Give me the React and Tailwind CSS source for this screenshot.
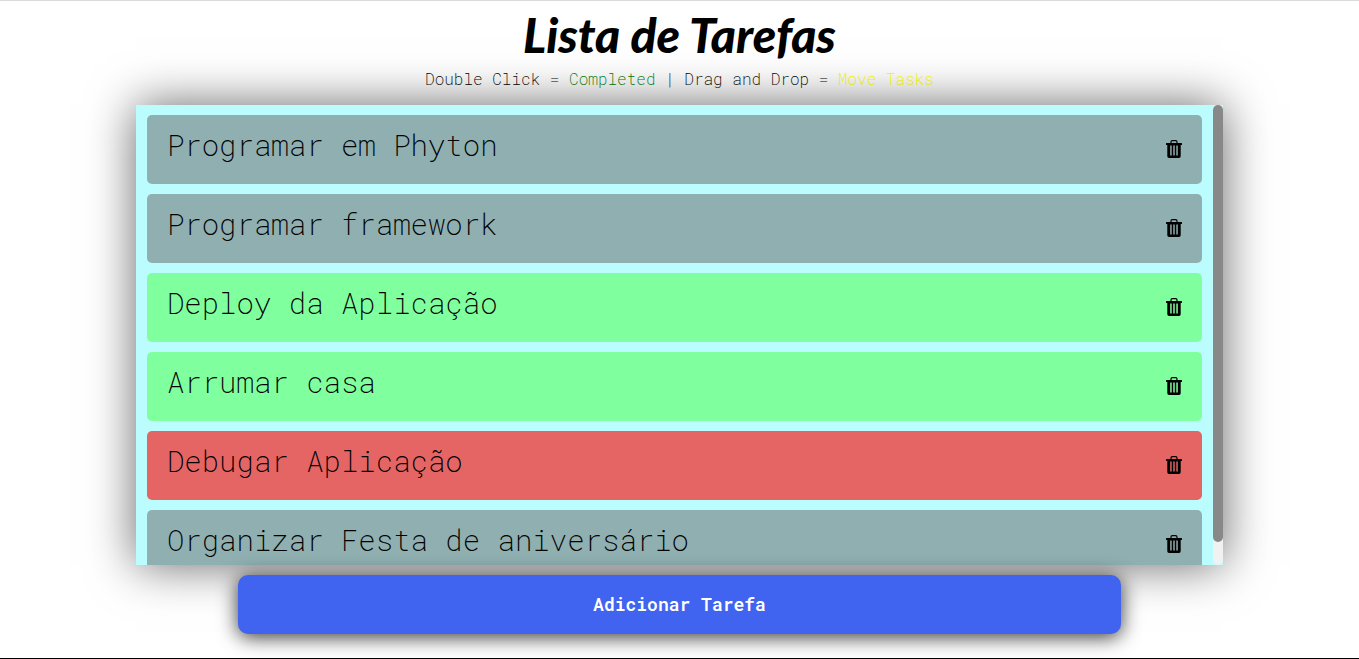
const tasks = [
  { title: "Programar em Phyton", status: "open" },
  { title: "Programar framework", status: "open" },
  { title: "Deploy da Aplicação", status: "done" },
  { title: "Arrumar casa", status: "done" },
  { title: "Debugar Aplicação", status: "urgent" },
  { title: "Organizar Festa de aniversário", status: "open" },
];

const statusColor = {
  open: "bg-[#8fafb0]",
  done: "bg-[#80ff9f]",
  urgent: "bg-[#e56565]",
};

function TrashIcon() {
  return (
    <svg width="16" height="18" viewBox="0 0 16 18" fill="currentColor" aria-hidden="true">
      <path d="M5 3.2V2Q5 .7 6.3 .7h3.4Q11 .7 11 2v1.2" fill="none" stroke="currentColor" strokeWidth="1.2" />
      <path d="M.5 3h15a.5.5 0 0 1 .5.5v1a.5.5 0 0 1-.5.5H.5a.5.5 0 0 1-.5-.5v-1A.5.5 0 0 1 .5 3z" />
      <path
        fillRule="evenodd"
        d="M1.3 4.5h13.4v11.7A1.8 1.8 0 0 1 12.9 18H3.1a1.8 1.8 0 0 1-1.800-1.800zM4.200 5.500v10h1.500v-10zM7.250 5.500v10h1.500v-10zM10.300 5.500v10h1.500v-10z"
      />
    </svg>
  );
}

function Task({ title, status }) {
  return (
    <li
      draggable
      className={`flex h-[69px] shrink-0 items-start justify-between rounded-[5px] px-5 ${statusColor[status]}`}
    >
      <span className="pt-[10px] text-[29px] leading-10">{title}</span>
      <button type="button" aria-label={`Excluir ${title}`} className="mt-[25px] cursor-pointer">
        <TrashIcon />
      </button>
    </li>
  );
}

export default function App() {
  return (
    <div className="flex min-h-screen flex-col items-center border-t border-b border-t-[#dadadd] border-b-black bg-white font-['Roboto_Mono','Liberation_Mono',monospace] font-extralight text-black">
      <header className="text-center">
        <h1 className="pt-1 font-['Lato',cursive] text-[48px] leading-[60px] font-black italic">
          Lista de Tarefas
        </h1>
        <p className="text-base leading-7">
          Double Click = <span className="text-[#008000]">Completed</span> | Drag and Drop ={" "}
          <span className="text-[#ffff00]">Move Tasks</span>
        </p>
      </header>
      <main className="mt-3 flex w-full flex-col items-center gap-[10px]">
        <div className="flex h-[460px] w-4/5 bg-[#bbfdff] shadow-[0_0_45px_rgba(0,0,0,0.6)]">
          <ul className="flex min-w-0 flex-1 [scrollbar-width:none] flex-col gap-[10px] overflow-y-auto px-[11px] py-[10px]">
            {tasks.map((task) => (
              <Task key={task.title} {...task} />
            ))}
          </ul>
          <div aria-hidden="true" className="w-[10px] rounded-[5px] bg-[#f1f1f1]">
            <div className="h-[95%] rounded-[5px] bg-[#888]" />
          </div>
        </div>
        <button
          type="button"
          className="h-[59px] w-[65%] cursor-pointer rounded-[10px] bg-[#4064f0] text-[18px] font-semibold text-white shadow-[0_3px_20px_rgba(0,0,0,0.8)]"
        >
          Adicionar Tarefa
        </button>
      </main>
    </div>
  );
}
